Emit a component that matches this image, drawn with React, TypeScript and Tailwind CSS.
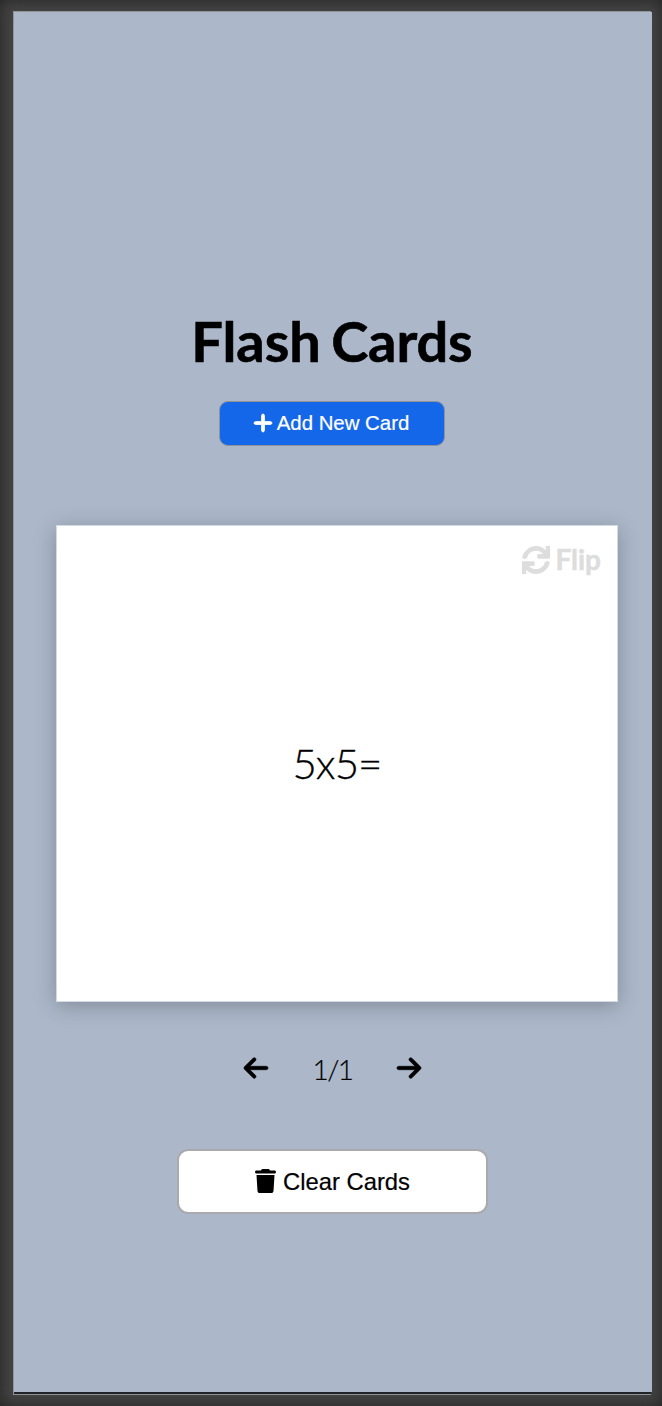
import React from "react";
import { FaArrowLeft, FaArrowRight, FaPlus, FaTrash } from "react-icons/fa6";
import { FaSync } from "react-icons/fa";

export default function App() {
  return (
    <div className="h-[1406px] w-[662px] bg-[#444444] pt-[11px] pl-[13px] shadow-[inset_0_0_16px_#242424]">
      <div className="flex h-[1384px] w-[638px] flex-col border-t border-b border-l border-[#929397] bg-[#222328]">
        <main className="flex h-[1380px] w-[638px] shrink-0 flex-col items-center bg-[#acb8ca] pt-[293px] pr-[2px] text-black">
          <h1 className="font-['Lato',sans-serif] text-[56px] leading-[72px] font-bold tracking-[-0.1px] [word-spacing:-3px] [-webkit-text-stroke:0.6px_black]">Flash Cards</h1>
          <button className="mt-[24px] flex h-[45px] w-[226px] items-center justify-center gap-[4px] rounded-[9px] border border-[#929397] bg-[#1567e9] pr-[2px] pb-[1px] font-['Liberation_Sans',sans-serif] text-[20.4px] text-white">
            <FaPlus className="mb-[1px] h-[22px] w-[20px]" stroke="currentColor" strokeWidth={22} />
            <span className="[-webkit-text-stroke:0.2px_white]">Add New Card</span>
          </button>
          <section className="mt-[79px] ml-[10px] flex h-[477px] w-[562px] shrink-0 flex-col border border-[#d3dae4] bg-white font-['Lato',sans-serif] shadow-[0_4px_20px_rgba(0,0,0,0.25)]">
            <button className="mt-[16px] mr-[16px] flex h-[34px] items-center gap-[5px] self-end text-[28px] leading-[34px] font-bold text-[#dddddd]">
              <FaSync className="mt-[1px] h-[28px] w-[28px]" stroke="currentColor" strokeWidth={16} />
              <span className="[-webkit-text-stroke:0.5px_#dddddd]">Flip</span>
            </button>
            <p className="mt-[161px] text-center text-[42px] leading-[52px] font-light tracking-[-0.9px] [-webkit-text-stroke:0.3px_black]">5x5=</p>
          </section>
          <nav className="mt-[47px] ml-[1px] flex h-[40px] w-[177px] items-center justify-between">
            <FaArrowLeft className="-mt-[3px] h-[28px] w-[24px] overflow-visible" stroke="currentColor" strokeWidth={12} />
            <span className="font-['Lato',sans-serif] text-[28px] leading-[40px] font-light tracking-[-1.5px] [-webkit-text-stroke:0.2px_black]">1/1</span>
            <FaArrowRight className="-mt-[3px] h-[28px] w-[24px] overflow-visible" stroke="currentColor" strokeWidth={12} />
          </nav>
          <button className="mt-[60px] flex h-[65px] w-[311px] items-center justify-center gap-[7px] rounded-[11px] border-2 border-[#aaaaad] bg-white pl-[1px] font-['Liberation_Sans',sans-serif] text-[23.8px]">
            <FaTrash className="-mt-[1px] h-[24px] w-[21px]" />
            <span className="[-webkit-text-stroke:0.2px_black]">Clear Cards</span>
          </button>
        </main>
      </div>
    </div>
  );
}
